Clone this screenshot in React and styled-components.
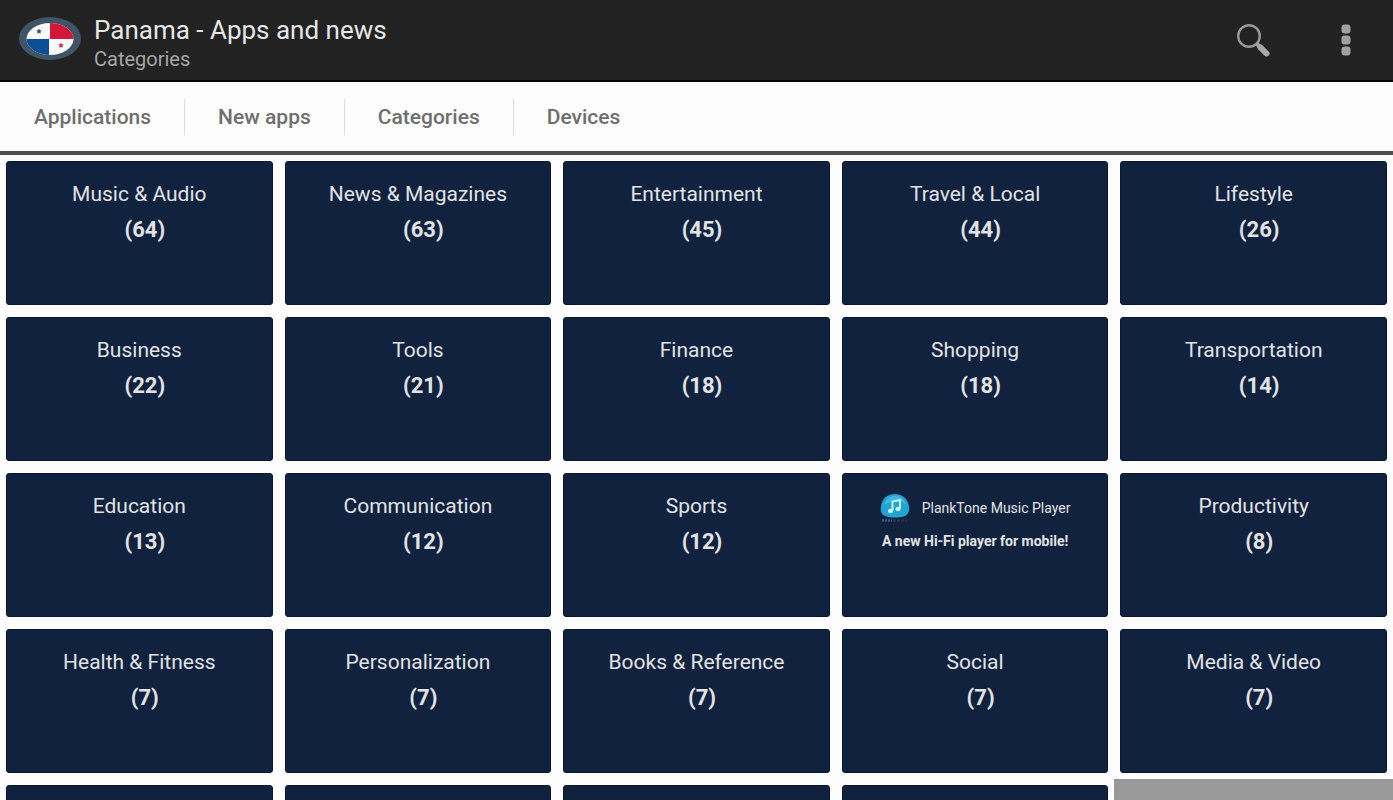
import React from 'react';
import styled, { createGlobalStyle } from 'styled-components';

//#region Global
const GlobalStyle = createGlobalStyle`
    * {
        box-sizing: border-box;
    }

    html, body, #root {
        height: 100%;
    }

    body {
        margin: 0;
        background: #999999;
        font-family: Roboto, "Liberation Sans", sans-serif;
    }
`
//#endregion

//#region Data
const tabs = ["Applications", "New apps", "Categories", "Devices"];

const categories = [
    { name: "Music & Audio", count: 64 },
    { name: "News & Magazines", count: 63 },
    { name: "Entertainment", count: 45 },
    { name: "Travel & Local", count: 44 },
    { name: "Lifestyle", count: 26 },
    { name: "Business", count: 22 },
    { name: "Tools", count: 21 },
    { name: "Finance", count: 18 },
    { name: "Shopping", count: 18 },
    { name: "Transportation", count: 14 },
    { name: "Education", count: 13 },
    { name: "Communication", count: 12 },
    { name: "Sports", count: 12 },
    { promo: true, name: "PlankTone Music Player", text: "A new Hi-Fi player for mobile!" },
    { name: "Productivity", count: 8 },
    { name: "Health & Fitness", count: 7 },
    { name: "Personalization", count: 7 },
    { name: "Books & Reference", count: 7 },
    { name: "Social", count: 7 },
    { name: "Media & Video", count: 7 },
    // still loading
    {}, {}, {}, {},
];
//#endregion

//#region Layout
const Page = styled.div`
    display: flex;
    flex-direction: column;
    height: 100vh;
    overflow: hidden;
`

const Header = styled.header`
    display: flex;
    flex: none;
    align-items: center;
    height: 82px;
    padding: 0 20px 0 19px;
    background: #222222;
    border-bottom: 2px solid #060606;
`

const Titles = styled.div`
    flex: 1;
    padding: 6px 0 0 13px;
`

const AppTitle = styled.h1`
    margin: 0;
    color: #e6e6e6;
    font-size: 26px;
    font-weight: 400;
    line-height: 32px;
`

const SubTitle = styled.div`
    color: #a6a6a6;
    font-size: 20px;
    line-height: 26px;
`

const IconButton = styled.button`
    display: flex;
    align-items: center;
    justify-content: center;
    width: ${props => props.$width}px;
    height: 60px;
    padding: 0;
    border: 0;
    background: none;
    cursor: pointer;
`

const TabBar = styled.nav`
    display: flex;
    flex: none;
    align-items: center;
    height: 73px;
    padding-left: 1px;
    background: #fdfdfd;
    border-bottom: 4px solid #4c4c4c;
`

const Tab = styled.a`
    padding: 0 33px;
    color: #6e6e6e;
    font-size: 21px;
    font-weight: 500;
    line-height: 36px;
    text-decoration: none;

    & + & {
        border-left: 1px solid #dcdcdc;
    }
`

const Grid = styled.main`
    display: grid;
    flex: 1;
    grid-template-columns: repeat(5, 1fr);
    grid-auto-rows: 156px;
    min-height: 0;
    overflow: hidden;
`

const Cell = styled.div`
    display: flex;
    padding: 6px;
    background: #fdfdfd;
`

const Card = styled.a`
    flex: 1;
    padding-top: 18px;
    border: 1px solid #0a1636;
    border-radius: 3px;
    background: #11223f;
    color: #e2e2e4;
    text-align: center;
    text-decoration: none;
`

const CardTitle = styled.div`
    font-size: 21px;
    line-height: 28px;
`

const CardCount = styled.div`
    padding: 8px 0 0 11px;
    font-size: 22px;
    font-weight: 700;
    line-height: 28px;
`

const PromoTitle = styled.div`
    display: flex;
    align-items: center;
    justify-content: center;
    gap: 12px;
    font-size: 14px;
    line-height: 32px;
`

const PromoText = styled.div`
    padding-top: 6px;
    font-size: 14px;
    font-weight: 700;
    line-height: 22px;
`
//#endregion

//#region Icons
const FlagIcon = () => (
    <svg width="62" height="46" viewBox="0 0 62 46" aria-hidden="true">
        <defs>
            <clipPath id="flagOval">
                <ellipse cx="31" cy="22" rx="23.5" ry="16" />
            </clipPath>
        </defs>
        <ellipse cx="31" cy="21.5" rx="31" ry="21.5" fill="#3f5565" />
        <g clipPath="url(#flagOval)">
            <rect width="62" height="46" fill="#fafafa" />
            <rect x="31" width="31" height="22" fill="#d3173b" />
            <rect y="22" width="30" height="24" fill="#0c4f96" />
        </g>
        <path d="M20 11.500l.8 1.800 2 .2-1.500 1.300.5 2-1.800-1.100-1.800 1.100.5-2-1.500-1.300 2-.2z" fill="#2f4a66" />
        <path d="M42 25.500l.8 1.800 2 .2-1.500 1.300.5 2-1.800-1.100-1.800 1.100.5-2-1.500-1.300 2-.2z" fill="#c2274a" />
    </svg>
)

const SearchIcon = () => (
    <svg width="34" height="34" viewBox="0 0 34 34" fill="none" aria-hidden="true">
        <circle cx="13" cy="13" r="10.8" stroke="#989898" strokeWidth="2.4" />
        <path d="M20.5 20.5l3 3" stroke="#a0a0a0" strokeWidth="4" />
        <path d="M24.5 24.500l6 6" stroke="#a8a8a8" strokeWidth="6" strokeLinecap="round" />
    </svg>
)

const MoreIcon = () => (
    <svg width="12" height="34" viewBox="0 0 12 34" fill="#a0a0a0" aria-hidden="true">
        <rect x="1.5" y="1.5" width="9" height="9" rx="3" />
        <rect x="1.5" y="12.5" width="9" height="9" rx="3" />
        <rect x="1.5" y="23.5" width="9" height="9" rx="3" />
    </svg>
)

const PlankToneIcon = () => (
    <svg width="30" height="32" viewBox="0 0 30 32" fill="none" aria-hidden="true">
        <path d="M5 24C1 22 0 18.500 1 14.500C2 6 8 2 15 2C22.500 2 28 7 29 14.500C30 19 28 22.500 25 24C20 26 10 26 5 24Z" fill="#22a3d4" />
        <path d="M4 13C6 7 10 4 15 4C20 4 24 7 26 12C19 8 10 9 4 13Z" fill="#3fbbe2" />
        <path d="M12.500 18.500V9.500L20 8V16.500" stroke="#c9f0f6" strokeWidth="2" />
        <ellipse cx="10.500" cy="19" rx="2.600" ry="2.200" fill="#c9f0f6" />
        <ellipse cx="18" cy="17" rx="2.600" ry="2.200" fill="#c9f0f6" />
        <path d="M2 28.500h10" stroke="#2b5f8f" strokeWidth="2.500" strokeDasharray="2 1" />
        <path d="M13 28.500h14" stroke="#2b3346" strokeWidth="2.500" strokeDasharray="3 1" />
    </svg>
)
//#endregion

//#region Category card
const CategoryCard = ({ item }) => {
    if (item.promo) {
        return (
            <Card href="#">
                <PromoTitle>
                    <PlankToneIcon />
                    {item.name}
                </PromoTitle>
                <PromoText>{item.text}</PromoText>
            </Card>
        )
    }

    return (
        <Card href="#">
            {item.name && <CardTitle>{item.name}</CardTitle>}
            {item.count && <CardCount>({item.count})</CardCount>}
        </Card>
    )
}
//#endregion

const App = () => (
    <Page>
        <GlobalStyle />
        <Header>
            <FlagIcon />
            <Titles>
                <AppTitle>Panama - Apps and news</AppTitle>
                <SubTitle>Categories</SubTitle>
            </Titles>
            <IconButton $width={132} aria-label="Search"><SearchIcon /></IconButton>
            <IconButton $width={54} aria-label="More options"><MoreIcon /></IconButton>
        </Header>
        <TabBar>
            {tabs.map(tab => <Tab key={tab} href="#">{tab}</Tab>)}
        </TabBar>
        <Grid>
            {categories.map((item, index) => (
                <Cell key={index}>
                    <CategoryCard item={item} />
                </Cell>
            ))}
        </Grid>
    </Page>
)

export default App;
